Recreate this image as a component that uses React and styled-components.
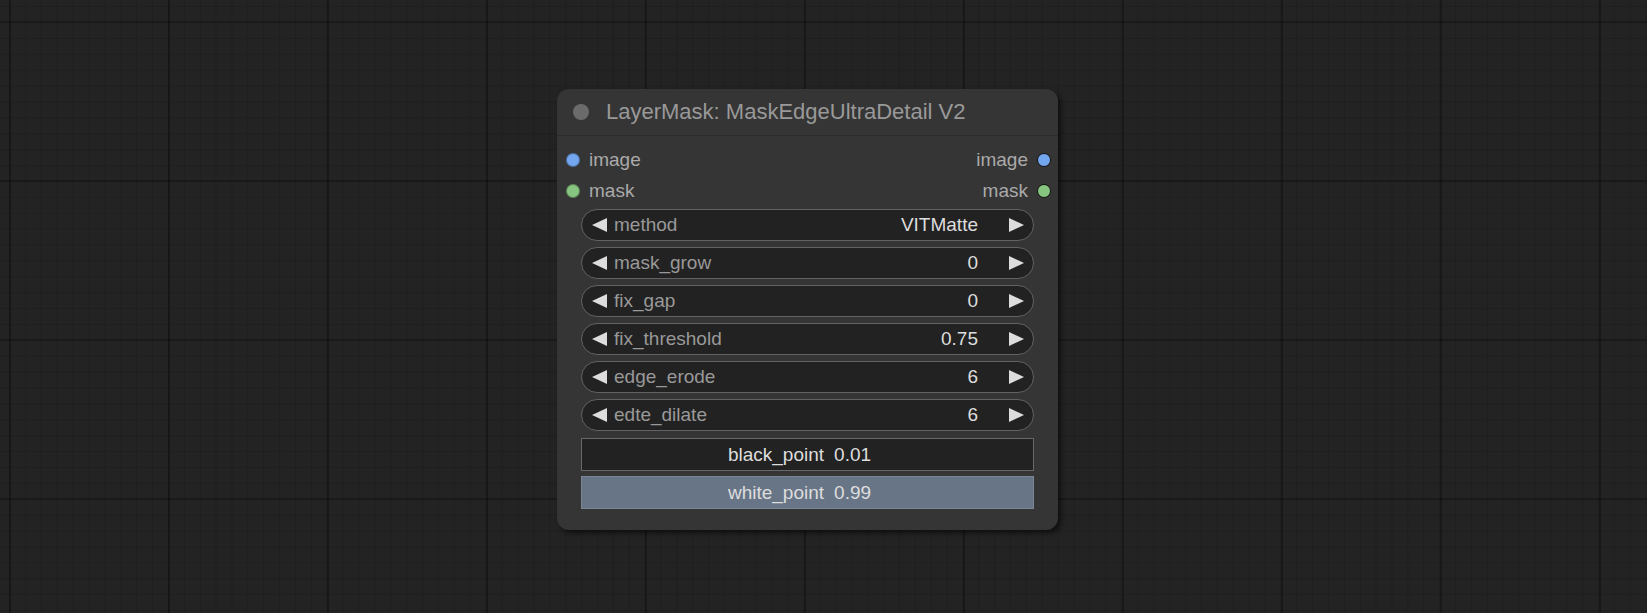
import styled, { createGlobalStyle } from 'styled-components';

const GlobalStyle = createGlobalStyle`
    html, body {
        margin: 0;
        padding: 0;
        background: #222222;
    }
    * {
        box-sizing: border-box;
    }
`

// graph canvas with the litegraph style grid
const Canvas = styled.div`
    position: relative;
    width: 100vw;
    height: 613px;
    overflow: hidden;
    font-family: 'Liberation Sans', Arial, sans-serif;
    background-color: #232323;
    background-image:
        linear-gradient(90deg, rgba(0, 0, 0, 0.28) 2px, transparent 2px),
        linear-gradient(0deg, rgba(0, 0, 0, 0.22) 2px, transparent 2px),
        linear-gradient(90deg, rgba(0, 0, 0, 0.12) 1px, transparent 1px),
        linear-gradient(0deg, rgba(0, 0, 0, 0.12) 1px, transparent 1px);
    background-size: 159px 159px, 159px 159px, 15.9px 15.9px, 15.9px 15.9px;
    background-position: 9px 0, 0 23px, 9px 0, 0 23px;
`

const Node = styled.div`
    position: absolute;
    left: ${p => p.x}px;
    top: ${p => p.y}px;
    width: 501px;
    background: #353535;
    border-radius: 12px;
    box-shadow: 3px 3px 5px rgba(0, 0, 0, 0.55);
    padding-bottom: 21px;
`

const Title = styled.div`
    height: 47px;
    display: flex;
    align-items: center;
    gap: 17px;
    padding-left: 16px;
    border-bottom: 1px solid #2c2c2c;
    color: #999999;
    font-size: 22px;
`

const TitleDot = styled.span`
    width: 16px;
    height: 16px;
    border-radius: 50%;
    background: #6b6b6b;
`

const Slots = styled.div`
    display: flex;
    justify-content: space-between;
    padding: 8px 7px 0 9px;
`

const SlotColumn = styled.div`
    display: flex;
    flex-direction: column;
    align-items: ${p => (p.output ? 'flex-end' : 'flex-start')};
`

const Slot = styled.div`
    height: 31px;
    display: flex;
    align-items: center;
    flex-direction: ${p => (p.output ? 'row-reverse' : 'row')};
    gap: 9px;
    color: #aaaaaa;
    font-size: 19px;
`

const SlotDot = styled.span`
    width: 14px;
    height: 14px;
    border-radius: 50%;
    background: ${p => p.color};
    border: 1.5px solid ${p => (p.output ? '#111' : 'rgba(0,0,0,0.3)')};
`

const Widgets = styled.div`
    display: flex;
    flex-direction: column;
    gap: 6px;
    padding: 3px 24px 0 24px;
`

const Combo = styled.div`
    height: 32px;
    display: flex;
    align-items: center;
    padding: 0 9px 0 10px;
    background: #222222;
    border: 1.5px solid #626262;
    border-radius: 16px;
    font-size: 19px;
`

const Label = styled.span`
    flex: 1;
    margin-left: 7px;
    color: #999999;
`

const Value = styled.span`
    margin-right: 31px;
    color: #dddddd;
`

const Slider = styled.div`
    position: relative;
    height: 33px;
    margin-top: ${p => p.top}px;
    background: #222222;
    border: 1.5px solid ${p => (p.filled ? '#7b8594' : '#686868')};
    font-size: 19px;
    color: #dddddd;
`

const SliderFill = styled.div`
    position: absolute;
    left: 0;
    top: 0;
    bottom: 0;
    background: #687587;
`

const SliderText = styled.div`
    position: relative;
    height: 100%;
    display: flex;
    align-items: center;
    justify-content: center;
    gap: 10px;
    padding-right: 16px;
`

const Arrow = ({ dir }) => (
    <svg width="15" height="14" viewBox="0 0 15 14">
        {dir === 'left'
            ? <polygon points="15,0 15,14 0,7" fill="#dddddd" />
            : <polygon points="0,0 0,14 15,7" fill="#dddddd" />}
    </svg>
)

const combos = [
    { name: 'method', value: 'VITMatte' },
    { name: 'mask_grow', value: '0' },
    { name: 'fix_gap', value: '0' },
    { name: 'fix_threshold', value: '0.75' },
    { name: 'edge_erode', value: '6' },
    { name: 'edte_dilate', value: '6' },
]

const sliders = [
    { name: 'black_point', value: 0.01, top: 1, fill: 0 },
    { name: 'white_point', value: 0.99, top: -1, fill: 100 },
]

const slots = [
    { name: 'image', color: '#72a6ee' },
    { name: 'mask', color: '#86c47f' },
]

const App = () => {
    return (
        <Canvas>
            <GlobalStyle />
            <Node x={557} y={89}>
                <Title>
                    <TitleDot />
                    LayerMask: MaskEdgeUltraDetail V2
                </Title>
                <Slots>
                    <SlotColumn>
                        {slots.map(s => (
                            <Slot key={s.name}>
                                <SlotDot color={s.color} />
                                {s.name}
                            </Slot>
                        ))}
                    </SlotColumn>
                    <SlotColumn output>
                        {slots.map(s => (
                            <Slot key={s.name} output>
                                <SlotDot color={s.color} output />
                                {s.name}
                            </Slot>
                        ))}
                    </SlotColumn>
                </Slots>
                <Widgets>
                    {combos.map(c => (
                        <Combo key={c.name}>
                            <Arrow dir="left" />
                            <Label>{c.name}</Label>
                            <Value>{c.value}</Value>
                            <Arrow dir="right" />
                        </Combo>
                    ))}
                    {sliders.map(s => (
                        <Slider key={s.name} top={s.top} filled={s.fill > 0}>
                            <SliderFill style={{ width: `${s.fill}%` }} />
                            <SliderText>
                                <span>{s.name}</span>
                                <span>{s.value.toFixed(2)}</span>
                            </SliderText>
                        </Slider>
                    ))}
                </Widgets>
            </Node>
        </Canvas>
    )
}

export default App;
